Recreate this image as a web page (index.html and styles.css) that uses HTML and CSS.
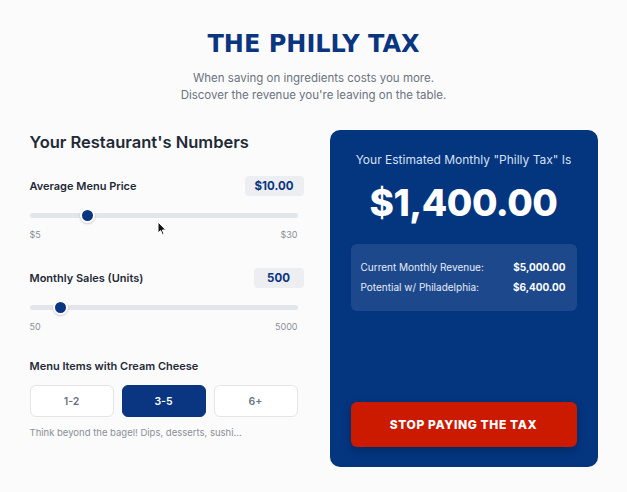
FILE: index.html
```html
<!DOCTYPE html>
<html lang="en">
<head>
<meta charset="utf-8">
<title>The Philly Tax</title>
<link rel="stylesheet" href="styles.css">
</head>
<body>
<main class="page">
  <header class="hero">
    <h1 class="title">THE PHILLY TAX</h1>
    <p class="subtitle">When saving on ingredients costs you more.<br>Discover the revenue you're leaving on the table.</p>
  </header>
  <div class="grid">
    <section class="inputs">
      <h2 class="section-title">Your Restaurant's Numbers</h2>
      <div class="field">
        <div class="field-head">
          <span class="label">Average Menu Price</span>
          <span class="badge">$10.00</span>
        </div>
        <div class="slider">
          <div class="track"></div>
          <div class="thumb" style="left: 21.6%"></div>
        </div>
        <div class="range-labels"><span>$5</span><span>$30</span></div>
      </div>
      <div class="field">
        <div class="field-head">
          <span class="label">Monthly Sales (Units)</span>
          <span class="badge">500</span>
        </div>
        <div class="slider">
          <div class="track"></div>
          <div class="thumb" style="left: 11.2%"></div>
        </div>
        <div class="range-labels"><span>50</span><span>5000</span></div>
      </div>
      <div class="field field-last">
        <span class="label">Menu Items with Cream Cheese</span>
        <div class="options">
          <button class="option">1-2</button>
          <button class="option option-active">3-5</button>
          <button class="option">6+</button>
        </div>
        <p class="hint">Think beyond the bagel! Dips, desserts, sushi...</p>
      </div>
      <svg class="cursor" width="10" height="15" viewBox="0 0 10 15"><path d="M1 1 L1 12 L3.6 9.6 L5.4 13.6 L7 12.9 L5.3 9 L8.8 9 Z" fill="#111" stroke="#fff" stroke-width="1"/></svg>
    </section>
    <section class="result">
      <p class="result-label">Your Estimated Monthly "Philly Tax" Is</p>
      <p class="result-amount">$1,400.00</p>
      <div class="breakdown">
        <div class="row"><span>Current Monthly Revenue:</span><strong>$5,000.00</strong></div>
        <div class="row"><span>Potential w/ Philadelphia:</span><strong>$6,400.00</strong></div>
      </div>
      <button class="cta">STOP PAYING THE TAX</button>
    </section>
  </div>
</main>
</body>
</html>
```

FILE: styles.css
```css
* { box-sizing: border-box; }
html, body { margin: 0; padding: 0; }
body {
  background: #fbfbfb;
  font-family: "Inter", "Noto Sans", sans-serif;
  color: #1f2937;
  width: 627px;
  height: 492px;
  overflow: hidden;
}
.page {
  width: 568px;
  margin: 0 auto;
  padding-top: 28px;
}
.hero { text-align: center; }
.title {
  margin: 0;
  font-family: "DejaVu Sans", sans-serif;
  font-weight: 700;
  font-size: 24px;
  line-height: 32px;
  color: #0a3580;
  letter-spacing: 0;
}
.subtitle {
  margin: 10px 0 0;
  font-size: 11.5px;
  line-height: 17px;
  color: #6b7280;
}
.grid {
  display: grid;
  grid-template-columns: 268px 268px;
  column-gap: 32px;
  margin-top: 26px;
}
.inputs { position: relative; padding-top: 0; }
.section-title {
  margin: 0;
  font-size: 16.5px;
  line-height: 24px;
  font-weight: 600;
  color: #1f2937;
}
.field { margin-top: 22px; }
.field + .field { margin-top: 28px; }
.field-head {
  display: flex;
  justify-content: space-between;
  align-items: center;
}
.label {
  font-size: 11px;
  font-weight: 600;
  color: #1f2937;
}
.badge {
  background: #eceef1;
  color: #0a3580;
  font-weight: 700;
  font-size: 11.5px;
  padding: 3px 10px;
  margin-right: -6px;
  border-radius: 4px;
  min-width: 50px;
  text-align: center;
}
.slider {
  position: relative;
  height: 14px;
  margin-top: 12px;
}
.track {
  position: absolute;
  left: 0; right: 0; top: 5px;
  height: 5px;
  background: #e2e5ea;
  border-radius: 3px;
}
.thumb {
  position: absolute;
  top: 0;
  width: 15px;
  height: 15px;
  margin-left: -7px;
  border-radius: 50%;
  background: #0a3580;
  border: 2px solid #fff;
  box-shadow: 0 1px 2px rgba(0,0,0,0.2);
}
.range-labels {
  display: flex;
  justify-content: space-between;
  margin-top: 7px;
  font-size: 9px;
  color: #8a8f98;
}
.field.field-last { margin-top: 22px; }
.options {
  display: grid;
  grid-template-columns: repeat(3, 1fr);
  gap: 8px;
  margin-top: 11px;
}
.option {
  height: 32px;
  border: 1.5px solid #e3e5e8;
  border-radius: 6px;
  background: #fff;
  font-family: inherit;
  font-size: 10.5px;
  font-weight: 600;
  color: #6b7280;
}
.option-active {
  background: #0a3580;
  border-color: #0a3580;
  color: #fff;
}
.hint {
  margin: 10px 0 0;
  font-size: 9.5px;
  color: #8a8f98;
}
.cursor {
  position: absolute;
  left: 127px;
  top: 91px;
}
.result {
  background: #04357f;
  border-radius: 10px;
  height: 337px;
  padding: 22px 21px 0;
  display: flex;
  flex-direction: column;
  align-items: stretch;
  text-align: center;
}
.result-label {
  margin: 0;
  font-size: 12px;
  line-height: 16px;
  color: #d6e0f2;
}
.result-amount {
  margin: 12px 0 0;
  font-size: 37px;
  line-height: 46px;
  font-weight: 800;
  color: #fff;
  letter-spacing: -0.5px;
}
.breakdown {
  margin-top: 18px;
  background: rgba(255,255,255,0.1);
  border-radius: 6px;
  padding: 17px 11px 18px 10px;
  display: flex;
  flex-direction: column;
  gap: 8px;
}
.row {
  display: flex;
  justify-content: space-between;
  font-size: 10px;
  line-height: 12px;
  color: #e6ecf7;
}
.row strong { color: #fff; font-weight: 700; }
.cta {
  margin-top: 91px;
  height: 45px;
  border: none;
  border-radius: 6px;
  background: #cc1a00;
  color: #fff;
  font-family: inherit;
  font-weight: 800;
  font-size: 12px;
  letter-spacing: 0.6px;
  box-shadow: 0 3px 8px rgba(0,0,0,0.25);
}
```
